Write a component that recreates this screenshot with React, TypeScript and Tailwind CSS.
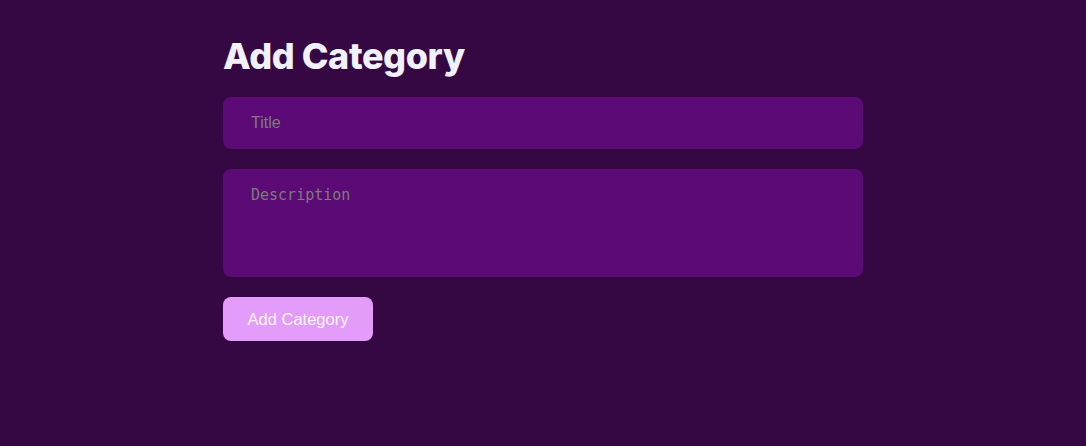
export default function App() {
  return (
    <div className="min-h-[446px] w-full bg-[#350844] pt-[34px]">
      <div className="ml-[223px] flex w-[640px] flex-col">
        <h1 className="font-['Inter',sans-serif] text-[36px] font-extrabold leading-[44px] tracking-[-0.4px] text-[#f1f0fd]">
          Add Category
        </h1>
        <form className="mt-[19px] flex flex-col">
          <input
            type="text"
            placeholder="Title"
            className="h-[52px] w-full rounded-lg bg-[#5c0a75] px-[28px] font-['Liberation_Sans',sans-serif] text-[16px] text-white outline-none placeholder:text-[#7c7c7c]"
          />
          <textarea
            placeholder="Description"
            className="mt-[20px] h-[108px] w-full resize-none rounded-lg bg-[#5c0a75] px-[28px] pt-[17px] font-['DejaVu_Sans_Mono',monospace] text-[15px] leading-[18px] text-white outline-none placeholder:text-[#7c7c7c]"
          />
          <button
            type="button"
            className="mt-[20px] h-[44px] w-[150px] rounded-lg bg-[#e39cf9] font-['Liberation_Sans',sans-serif] text-[16.5px] text-[#fdf5ff]"
          >
            Add Category
          </button>
        </form>
      </div>
    </div>
  );
}
